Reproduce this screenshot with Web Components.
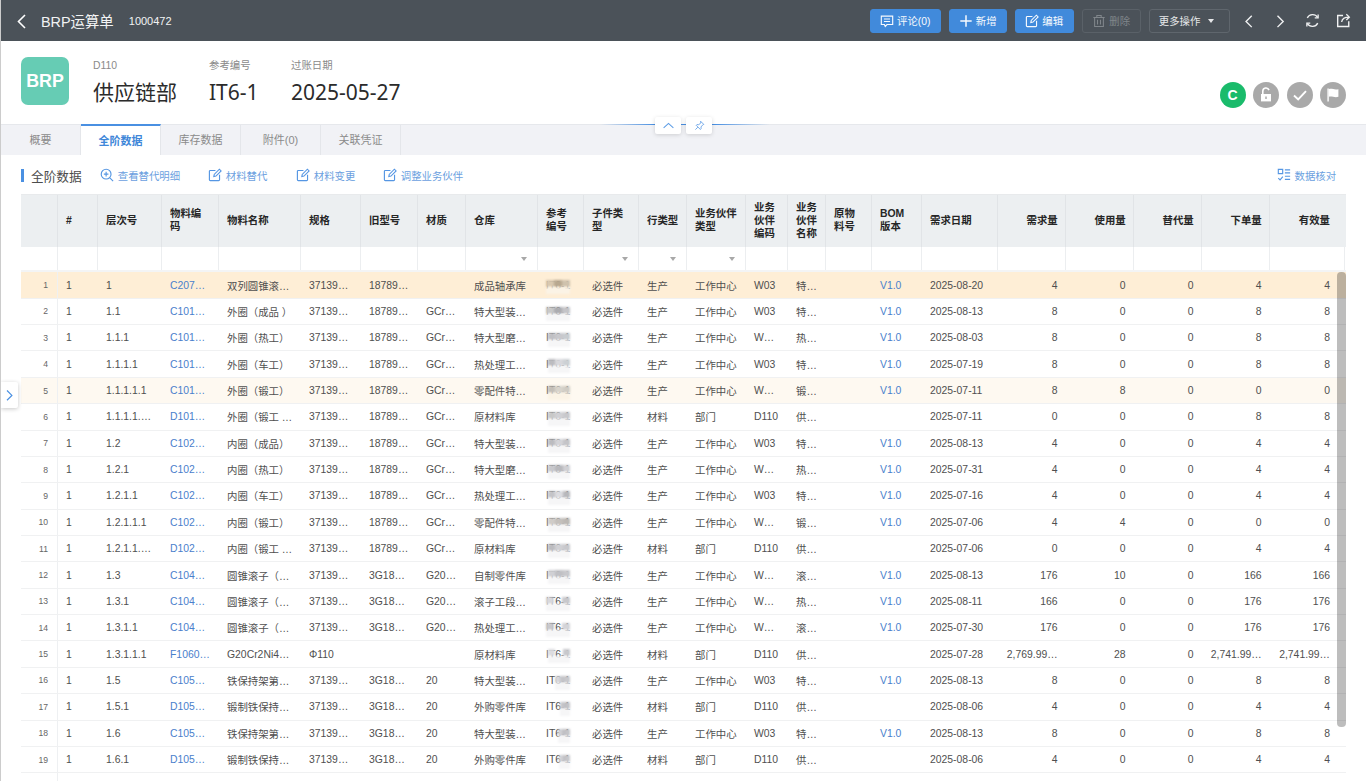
<!DOCTYPE html>
<html lang="zh-CN">
<head>
<meta charset="utf-8">
<title>BRP运算单</title>
<style>
html,body{margin:0;height:100%;overflow:hidden;background:#fff;}
body{
    display:flex;flex-direction:column;position:relative;
    font-family:"Liberation Sans","Noto Sans CJK SC",sans-serif;
    border-left:1px solid #ccc;box-sizing:border-box;
}
</style>
</head>
<body>
<top-bar title="BRP运算单" code="1000472">
    <head-btn icon="comment" kind="primary" w="71">评论(0)</head-btn>
    <head-btn icon="plus" kind="primary" w="58.5">新增</head-btn>
    <head-btn icon="edit" kind="primary" w="59">编辑</head-btn>
    <head-btn icon="trash" kind="disabled" w="59.5">删除</head-btn>
    <head-btn icon="caret" kind="outline" w="81">更多操作</head-btn>
</top-bar>
<doc-summary>
    <doc-field label="D110" value="供应链部" w="116"></doc-field>
    <doc-field label="参考编号" value="IT6-1" w="82"></doc-field>
    <doc-field label="过账日期" value="2025-05-27" w="120"></doc-field>
</doc-summary>
<tab-strip active="1" tabs="概要,全阶数据,库存数据,附件(0),关联凭证"></tab-strip>
<grid-toolbar title="全阶数据">
    <tool-link icon="zoom" w="108">查看替代明细</tool-link>
    <tool-link icon="edit" w="88">材料替代</tool-link>
    <tool-link icon="edit" w="87">材料变更</tool-link>
    <tool-link icon="edit" w="80">调整业务伙伴</tool-link>
    <tool-link slot="right" icon="check" w="58">数据核对</tool-link>
</grid-toolbar>
<bom-table></bom-table>
<side-toggle></side-toggle>

<script>
//shared svg icons, stroke follows currentColor
const ICONS = {
    back: `<path d="M10 2 3.5 8.5 10 15" fill="none" stroke="currentColor" stroke-width="1.6"/>`,
    next: `<path d="M4 2l6.5 6.5L4 15" fill="none" stroke="currentColor" stroke-width="1.6"/>`,
    comment: `<path d="M1.5 2.5h13v9.5H8l-2 2.2-1-2.2H1.5z" fill="none" stroke="currentColor" stroke-width="1.3"/><path d="M4.5 5.8h7M4.5 8.6h7" stroke="currentColor" stroke-width="1.2"/>`,
    plus: `<path d="M8 1.5v13M1.5 8h13" stroke="currentColor" stroke-width="1.7"/>`,
    edit: `<path d="M8.5 2.8H2.6a1 1 0 0 0-1 1v9.6a1 1 0 0 0 1 1h9.6a1 1 0 0 0 1-1V7.6" fill="none" stroke="currentColor" stroke-width="1.3"/><path d="M6.6 9.8l.5-2.5L13 1.4l2 2-5.9 5.9z" fill="none" stroke="currentColor" stroke-width="1.2"/>`,
    trash: `<path d="M1.5 4h13M5.5 4V1.8h5V4M3 4v10.2h10V4M6.3 6.5v5.5M9.7 6.5v5.5" fill="none" stroke="currentColor" stroke-width="1.2"/>`,
    refresh: `<g transform="matrix(-1 0 0 1 16 0)"><path d="M13.6 5.2A6.4 6.4 0 0 0 2.5 4.6M2.4 10.8a6.4 6.4 0 0 0 11.1.6" fill="none" stroke="currentColor" stroke-width="1.4"/><path d="M2 1.6v3.6h3.6M14 14.4v-3.6h-3.6" fill="none" stroke="currentColor" stroke-width="1.4"/></g>`,
    share: `<path d="M7.5 2.6H1.8v11.8h11.8V8.8" fill="none" stroke="currentColor" stroke-width="1.5"/><path d="M6 9.6c.5-3.4 3-5.2 8-5.2M11 1.4l3.2 3-3.2 3" fill="none" stroke="currentColor" stroke-width="1.4"/>`,
    zoom: `<circle cx="7" cy="7" r="5.6" fill="none" stroke="currentColor" stroke-width="1.3"/><path d="M11.2 11.2 15 15M7 4.4v5.2M4.4 7h5.2" stroke="currentColor" stroke-width="1.3"/>`,
    check: `<path d="M1.5 1.5h5v5h-5z" fill="none" stroke="currentColor" stroke-width="1.3"/><path d="M9 2.2h6M9 5.6h6M9 9.4h6M9 13h6" stroke="currentColor" stroke-width="1.3"/><path d="M1.5 11.5l2 2 3.2-3.6" fill="none" stroke="currentColor" stroke-width="1.3"/>`,
    up: `<path d="M2 11l6-5.5 6 5.5" fill="none" stroke="currentColor" stroke-width="1.3"/>`,
    pin: `<path d="M9.6 1.8l4.6 4.6-1.4.6-2.6 3.1.1 2.7-1 1L3.2 7.7l1-1 2.7.1L10 4.2zM5.6 10.4 2 14" fill="none" stroke="currentColor" stroke-width="1.2"/>`
};
const svg = (name, size) => `<svg width="${size}" height="${size}" viewBox="0 0 16 16" aria-hidden="true">${ICONS[name]}</svg>`;

class TopBar extends HTMLElement{
    constructor(){
        super();
        this.attachShadow({mode:"open"});
    }
    connectedCallback(){
        this.shadowRoot.innerHTML = `
        <style>
        :host{display:flex;align-items:center;height:41px;flex:none;margin-left:-1px;background:#4b5259;color:#fff;padding:0 15px 0 15px;}
        .back{display:flex;margin-right:10px;color:#fff;}
        .title{font-size:14.4px;color:#f2f3f4;padding-bottom:1px;}
        .code{font-size:11px;color:#f2f3f4;margin-left:15px;}
        .actions{margin-left:auto;display:flex;align-items:center;gap:7.75px;}
        .nav{display:flex;align-items:center;color:#f0f1f2;margin-left:4.5px;gap:15px;}
        .nav span{display:flex;width:16px;justify-content:center;}
        </style>
        <span class="back">${svg("back",16)}</span>
        <span class="title">${this.getAttribute("title")}</span>
        <span class="code">${this.getAttribute("code")}</span>
        <div class="actions">
            <slot></slot>
            <div class="nav">
                <span>${svg("back",14)}</span>
                <span>${svg("next",14)}</span>
                <span>${svg("refresh",15)}</span>
                <span>${svg("share",15)}</span>
            </div>
        </div>`;
    }
}
customElements.define("top-bar", TopBar);

class HeadBtn extends HTMLElement{
    constructor(){
        super();
        this.attachShadow({mode:"open"});
    }
    connectedCallback(){
        const kind = this.getAttribute("kind");
        const icon = this.getAttribute("icon");
        const colors = {
            primary:"background:#418adb;color:#f7fafe;border-color:#418adb;",
            disabled:"background:transparent;color:#80868b;border-color:#5a6168;",
            outline:"background:transparent;color:#e6e8ea;border-color:#5f666d;justify-content:flex-start;padding-left:9px;"
        };
        const mark = icon == "caret"
            ? `<i class="caret"></i>`
            : svg(icon, 14);
        this.shadowRoot.innerHTML = `
        <style>
        :host{display:flex;align-items:center;justify-content:center;gap:3px;box-sizing:border-box;height:24px;width:${this.getAttribute("w")}px;border:1px solid;border-radius:3px;font-size:10.4px;${colors[kind]}}
        svg{flex:none;}
        .caret{order:2;margin-left:5px;border:3.5px solid transparent;border-top:4px solid #e6e8ea;border-bottom:0;}
        </style>
        ${mark}<slot></slot>`;
    }
}
customElements.define("head-btn", HeadBtn);

class DocField extends HTMLElement{
    constructor(){
        super();
        this.attachShadow({mode:"open"});
    }
    connectedCallback(){
        this.shadowRoot.innerHTML = `
        <style>
        :host{display:block;width:${this.getAttribute("w")}px;}
        .l{font-size:10.4px;line-height:13px;color:#8a8a8a;}
        .v{font-family:"Noto Sans","Noto Sans CJK SC",sans-serif;font-size:21px;line-height:30px;margin-top:5px;color:#2b2b2b;white-space:nowrap;}
        </style>
        <div class="l">${this.getAttribute("label")}</div>
        <div class="v">${this.getAttribute("value")}</div>`;
    }
}
customElements.define("doc-field", DocField);

class DocSummary extends HTMLElement{
    constructor(){
        super();
        this.attachShadow({mode:"open"});
        this.shadowRoot.innerHTML = `
        <style>
        :host{display:flex;flex:none;height:83px;box-sizing:border-box;padding:16px 20px 0 20px;position:relative;}
        .logo{width:48px;height:48px;border-radius:7px;background:#66ccb4;color:#fff;font-size:17.8px;font-weight:700;display:flex;align-items:center;justify-content:center;margin-right:24px;}
        .fields{display:flex;padding-top:2px;}
        .dots{margin-left:auto;display:flex;gap:7.5px;padding-top:25px;}
        .dot{width:26px;height:26px;border-radius:50%;background:#a9a9a9;color:#fff;display:flex;align-items:center;justify-content:center;font-size:14px;font-weight:700;}
        .dot.c{background:#1abb6b;}
        /* collapse handle sits on the seam between summary and tabs */
        .fold{position:absolute;left:599px;width:170px;bottom:-1px;height:1.5px;background:linear-gradient(90deg,rgba(74,144,226,0),#4a90e2 32%,#4a90e2 68%,rgba(74,144,226,0));}
        .fold div{position:absolute;top:-7px;width:26px;height:17px;background:#fff;border-radius:2px;box-shadow:0 1px 4px rgba(0,0,0,.15);color:#5c9ce6;display:flex;align-items:center;justify-content:center;}
        </style>
        <div class="logo">BRP</div>
        <div class="fields"><slot></slot></div>
        <div class="dots">
            <div class="dot c">C</div>
            <div class="dot"><svg width="18" height="18" viewBox="0 0 18 18"><path d="M5.8 8V5.2a3.2 3.2 0 0 1 6.2-1.1" fill="none" stroke="#fff" stroke-width="1.6"/><path d="M4 8h10v7.4H4z" fill="#fff"/><path d="M9 10.4v2.6" stroke="#a9a9a9" stroke-width="1.5"/></svg></div>
            <div class="dot"><svg width="18" height="18" viewBox="0 0 18 18"><path d="M3 9.5l4.2 4L15 5.2" fill="none" stroke="#fff" stroke-width="1.9"/></svg></div>
            <div class="dot"><svg width="18" height="18" viewBox="0 0 18 18"><path d="M3.4 2.6h1.4v13H3.4z" fill="#fff"/><path d="M4.8 3.2c3-1.2 5.4 1.2 9.6 0v7.6c-4.2 1.2-6.6-1.2-9.6 0z" fill="#fff"/></svg></div>
        </div>
        <div class="fold">
            <div style="left:55px">${svg("up",13)}</div>
            <div style="left:86px">${svg("pin",11)}</div>
        </div>`;
    }
}
customElements.define("doc-summary", DocSummary);

class TabStrip extends HTMLElement{
    constructor(){
        super();
        this.attachShadow({mode:"open"});
    }
    connectedCallback(){
        const active = Number(this.getAttribute("active"));
        const tabs = this.getAttribute("tabs").split(",").map((t,i) =>
            `<div class="tab${i == active ? " on" : ""}">${t}</div>`).join("");
        this.shadowRoot.innerHTML = `
        <style>
        :host{display:flex;flex:none;height:31px;box-sizing:border-box;background:#f1f2f6;border-top:1px solid #e6e8ec;}
        .tab{box-sizing:border-box;width:80px;display:flex;align-items:center;justify-content:center;padding-bottom:2px;font-size:11px;color:#8b8b8b;border-right:1px solid #e4e6ea;}
        .on{background:#fff;color:#3f87d9;font-weight:700;border-top:2px solid #4a90e2;margin-top:-1px;}
        </style>${tabs}`;
    }
}
customElements.define("tab-strip", TabStrip);

class GridToolbar extends HTMLElement{
    constructor(){
        super();
        this.attachShadow({mode:"open"});
    }
    connectedCallback(){
        this.shadowRoot.innerHTML = `
        <style>
        :host{display:flex;align-items:center;flex:none;height:39px;box-sizing:border-box;padding:1px 31px 0 20px;}
        .mark{width:2.5px;height:13px;background:#4a90e2;margin-right:7.5px;}
        .t{font-size:12.7px;color:#4c4c4c;margin-right:18.5px;}
        .r{margin-left:auto;display:flex;}
        </style>
        <span class="mark"></span>
        <span class="t">${this.getAttribute("title")}</span>
        <slot></slot>
        <div class="r"><slot name="right"></slot></div>`;
    }
}
customElements.define("grid-toolbar", GridToolbar);

class ToolLink extends HTMLElement{
    constructor(){
        super();
        this.attachShadow({mode:"open"});
    }
    connectedCallback(){
        this.shadowRoot.innerHTML = `
        <style>
        :host{display:flex;align-items:center;gap:3.5px;width:${this.getAttribute("w")}px;font-size:10.4px;color:#6b9fe0;white-space:nowrap;}
        svg{flex:none;color:#5596e3;}
        </style>
        ${svg(this.getAttribute("icon"),14)}<slot></slot>`;
    }
}
customElements.define("tool-link", ToolLink);

const COLS = [37,40,64,57,82,60,57,48,72,46,55,48,59,42,38,46,50,76,68,68,68,68,75];
const HEADS = ["","#","层次号","物料编<br>码","物料名称","规格","旧型号","材质","仓库","参考<br>编号","子件类<br>型","行类型","业务伙伴<br>类型","业务<br>伙伴<br>编码","业务<br>伙伴<br>名称","原物<br>料号","BOM<br>版本","需求日期","需求量","使用量","替代量","下单量","有效量"];
const FILTERS = [8,10,11,12];
const A = "37139…", B = "18789…", C = "3G18…";
const SEMI = ["必选件","生产","工作中心"], RAW = ["必选件","材料","部门"];
// level,code,name,spec,old,material,warehouse,flags,partner,partner name,bom,date,qty x5
const ROWS = [
    ["1","C207…","双列圆锥滚…",A,B,"","成品轴承库",SEMI,"W03","特…","V1.0","2025-08-20",["4","0","0","4","4"]],
    ["1.1","C101…","外圈（成品 ）",A,B,"GCr…","特大型装…",SEMI,"W03","特…","V1.0","2025-08-13",["8","0","0","8","8"]],
    ["1.1.1","C101…","外圈（热工）",A,B,"GCr…","特大型磨…",SEMI,"W…","热…","V1.0","2025-08-03",["8","0","0","8","8"]],
    ["1.1.1.1","C101…","外圈（车工）",A,B,"GCr…","热处理工…",SEMI,"W03","特…","V1.0","2025-07-19",["8","0","0","8","8"]],
    ["1.1.1.1.1","C101…","外圈（锻工）",A,B,"GCr…","零配件特…",SEMI,"W…","锻…","V1.0","2025-07-11",["8","8","0","0","0"]],
    ["1.1.1.1.…","D101…","外圈（锻工 …",A,B,"GCr…","原材料库",RAW,"D110","供…","","2025-07-11",["0","0","0","8","8"]],
    ["1.2","C102…","内圈（成品）",A,B,"GCr…","特大型装…",SEMI,"W03","特…","V1.0","2025-08-13",["4","0","0","4","4"]],
    ["1.2.1","C102…","内圈（热工）",A,B,"GCr…","特大型磨…",SEMI,"W…","热…","V1.0","2025-07-31",["4","0","0","4","4"]],
    ["1.2.1.1","C102…","内圈（车工）",A,B,"GCr…","热处理工…",SEMI,"W03","特…","V1.0","2025-07-16",["4","0","0","4","4"]],
    ["1.2.1.1.1","C102…","内圈（锻工）",A,B,"GCr…","零配件特…",SEMI,"W…","锻…","V1.0","2025-07-06",["4","4","0","0","0"]],
    ["1.2.1.1.…","D102…","内圈（锻工 …",A,B,"GCr…","原材料库",RAW,"D110","供…","","2025-07-06",["0","0","0","4","4"]],
    ["1.3","C104…","圆锥滚子（…",A,C,"G20…","自制零件库",SEMI,"W…","滚…","V1.0","2025-08-13",["176","10","0","166","166"]],
    ["1.3.1","C104…","圆锥滚子（…",A,C,"G20…","滚子工段…",SEMI,"W…","热…","V1.0","2025-08-11",["166","0","0","176","176"]],
    ["1.3.1.1","C104…","圆锥滚子（…",A,C,"G20…","热处理工…",SEMI,"W…","滚…","V1.0","2025-07-30",["176","0","0","176","176"]],
    ["1.3.1.1.1","F1060…","G20Cr2Ni4…","Φ110","","","原材料库",RAW,"D110","供…","","2025-07-28",["2,769.99…","28","0","2,741.99…","2,741.99…"]],
    ["1.5","C105…","铁保持架第…",A,C,"20","特大型装…",SEMI,"W03","特…","V1.0","2025-08-13",["8","0","0","8","8"]],
    ["1.5.1","D105…","锻制铁保持…",A,C,"20","外购零件库",RAW,"D110","供…","","2025-08-06",["4","0","0","4","4"]],
    ["1.6","C105…","铁保持架第…",A,C,"20","特大型装…",SEMI,"W03","特…","V1.0","2025-08-13",["8","0","0","8","8"]],
    ["1.6.1","D105…","锻制铁保持…",A,C,"20","外购零件库",RAW,"D110","供…","","2025-08-06",["4","0","0","4","4"]]
];
//blurred patch over the reference number: offset x and three block greys, "" leaves text visible
const MASKS = [
    [0,"#d8c8b0","#b8a890","#cfc2ad"],[0,"#c8c8c8","#acacb0","#c4c4c8"],[2,"#c0c0c4","#c8c8cc","#c8ccd0"],[2,"#bcbcc0","#d8d8dc","#ccd0d4"],[2,"#c4bfb8","#d8d4cc","#d0ccc4"],
    [2,"#c8c8c8","#d0d0d4","#c8c8cc"],[2,"#bcbcc0","#d4d4d8","#c4c4c8"],[2,"#c8c8cc","#b8b8bc","#d0d0d4"],[2,"#c4c4c8","#dcdce0","#b8b8bc"],[2,"#d0ccc8","#c4c0bc","#bcb8b4"],
    [2,"#bcbcc0","#d0d0d4","#c8c8cc"],[2,"#d0d0d4","#c0c0c4","#c8c8cc"],[0,"#d8d8dc","","#c8c8cc"],[0,"#c8c8cc","","#d4d4d8"],[2,"#dcdce0","","#c8c8cc"],
    [9,"#d8d8dc","#c4c4c8","#c8c8cc"],[14,"#c8c8cc","#c0c0c4","#c4c4c8"],[12,"#d0d0d4","#c0c0c4","#c4c4c8"],[13,"#d0d0d4","#c0c0c4","#c8c8cc"]
];

class BomTable extends HTMLElement{
    constructor(){
        super();
        this.attachShadow({mode:"open"});
    }
    connectedCallback(){
        const cols = COLS.map(w => w + "px").join(" ");
        const head = HEADS.map((h,i) => `<div class="h${i >= 18 ? " num" : ""}${i == 22 ? " last" : ""}">${h}</div>`).join("");
        const filter = COLS.map((w,i) => `<div class="f">${FILTERS.includes(i) ? "<i></i>" : ""}</div>`).join("");
        const body = ROWS.map((r,i) => this.rowHtml(r,i)).join("");
        this.shadowRoot.innerHTML = `
        <style>
        :host{display:block;flex:1;min-height:0;overflow:hidden;margin:0 20px;position:relative;color:#4f4f4f;font-size:10.4px;}
        .row{display:grid;grid-template-columns:${cols};}
        .head{height:53px;background:#eceff1;border-top:1px solid #e8eaec;box-sizing:border-box;}
        .h{display:flex;align-items:center;padding:0 7.3px 2px 8px;font-weight:700;color:#262626;line-height:13px;border-right:1px solid #e1e4e7;white-space:nowrap;}
        .h.num{justify-content:flex-end;}
        .h.last{padding-right:15px;border-right:0;}
        .filter{height:25.4px;box-sizing:border-box;border-bottom:2px solid #f3f4f5;}
        .f{border-right:1px solid #eceef0;position:relative;}
        .f i{position:absolute;right:10px;top:10px;border:3px solid transparent;border-top:4px solid #a8a8a8;border-bottom:0;}
        .r{height:26.37px;box-sizing:border-box;border-bottom:1px solid #f0f1f2;}
        .r.hit{background:#feeed6;}
        .r.soft{background:#fef9f1;}
        .c{display:flex;align-items:center;padding:0 4px 0 8px;white-space:nowrap;overflow:hidden;position:relative;}
        .c.idx{justify-content:flex-end;padding:0 9px 0 0;font-size:8.6px;color:#666;border-right:1px solid #eef0f2;}
        .c.num{justify-content:flex-end;padding:0 8.4px 0 0;}
        .c.last{padding-right:15px;}
        .link{color:#4a80cc;}
        .mask{position:absolute;top:8px;height:7px;display:flex;filter:blur(.8px);}
        .mask b{flex:1;}
        .pale{position:absolute;top:15px;height:7px;background:#f6f6f7;filter:blur(.8px);}
        .hit .pale,.soft .pale{background:#fbf3e6;}
        /* scrollbar thumb floats over the rows */
        .thumb{position:absolute;right:0;top:78px;width:9.5px;height:455px;background:rgba(0,0,0,.26);border-radius:4px;}
        </style>
        <div class="row head">${head}</div>
        <div class="row filter">${filter}</div>
        ${body}
        <div class="row r"><div class="c idx"></div></div>
        <div class="thumb"></div>`;
    }
    rowHtml(r,i){
        const [level,code,name,spec,old,mat,wh,flags,pcode,pname,bom,date,qty] = r;
        const m = MASKS[i];
        const blocks = m.slice(1).map(c => `<b style="background:${c || "transparent"}"></b>`).join("");
        const box = `left:${8 + m[0]}px;width:${24 - m[0]}px`;
        const mask = `<span class="mask" style="${box}">${blocks}</span><span class="pale" style="${box}"></span>`;
        const tone = i == 0 ? " hit" : i == 4 ? " soft" : "";
        return `<div class="row r${tone}">
            <div class="c idx">${i + 1}</div>
            <div class="c">1</div>
            <div class="c">${level}</div>
            <div class="c link">${code}</div>
            <div class="c">${name}</div>
            <div class="c">${spec}</div>
            <div class="c">${old}</div>
            <div class="c">${mat}</div>
            <div class="c">${wh}</div>
            <div class="c">IT6-1${mask}</div>
            <div class="c">${flags[0]}</div>
            <div class="c">${flags[1]}</div>
            <div class="c">${flags[2]}</div>
            <div class="c">${pcode}</div>
            <div class="c">${pname}</div>
            <div class="c"></div>
            <div class="c link">${bom}</div>
            <div class="c">${date}</div>
            ${qty.map((q,k) => `<div class="c num${k == 4 ? " last" : ""}">${q}</div>`).join("")}
        </div>`;
    }
}
customElements.define("bom-table", BomTable);

class SideToggle extends HTMLElement{
    constructor(){
        super();
        this.attachShadow({mode:"open"});
        this.shadowRoot.innerHTML = `
        <style>
        :host{position:absolute;left:0;top:382px;width:17px;height:26px;background:#fff;border-radius:0 2px 2px 0;box-shadow:0 1px 4px rgba(0,0,0,.22);color:#4a90e2;display:flex;align-items:center;justify-content:center;}
        </style>
        ${svg("next",12)}`;
    }
}
customElements.define("side-toggle", SideToggle);
</script>
</body>
</html>
